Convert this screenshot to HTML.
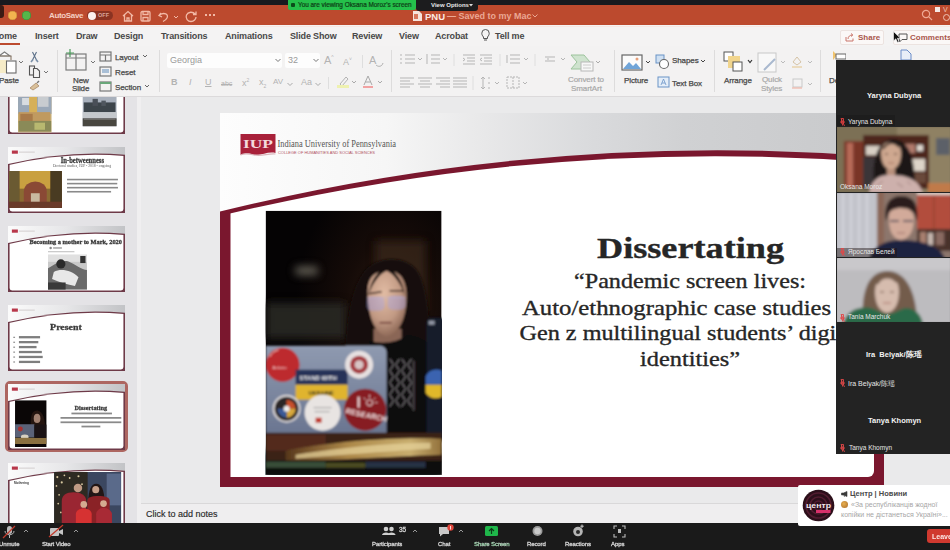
<!DOCTYPE html>
<html><head><meta charset="utf-8">
<style>
*{margin:0;padding:0;box-sizing:border-box}
html,body{width:950px;height:550px;overflow:hidden;background:#e8e8e9;font-family:"Liberation Sans",sans-serif;position:relative}
#root{position:absolute;left:0;top:0;width:950px;height:550px;overflow:hidden;filter:blur(0.5px)}
.a{position:absolute}
.t{position:absolute;white-space:nowrap;line-height:1}
.tab{top:31.5px;font-size:9px;font-weight:bold;color:#484848;letter-spacing:-0.15px}
.sep{top:50px;width:1px;height:42px;background:#dddcdc}
.lbl{font-size:8px;color:#474747;-webkit-text-stroke:0.25px #474747;letter-spacing:-0.1px}
.dimt{color:#a8a8a8;-webkit-text-stroke:0.2px #a8a8a8}
.dim{font-size:9px;color:#b3b3b3;top:78px}
.gname{font-size:7.5px;font-weight:bold;color:#f2f2f2}
.glab{font-size:6.5px;color:#e6e6e6}
.zl{font-size:6px;color:#d6d6d6;-webkit-text-stroke:0.3px #d6d6d6;letter-spacing:-0.1px}
</style></head><body><div id="root">
<!-- top black bar -->
<div class="a" style="left:0;top:0;width:950px;height:5px;background:#181a1f"></div>
<!-- title bar -->
<div class="a" style="left:0;top:4.5px;width:950px;height:20.5px;background:#bc4a2e"></div>
<div class="a" style="left:0;top:5px;width:4px;height:13px;background:#3a1a14;border-radius:0 3px 3px 0"></div>
<div class="a" style="left:8px;top:10.5px;width:9px;height:9px;border-radius:50%;background:#f2b34f;box-shadow:inset 0 0 0 0.6px #c88a3a"></div>
<div class="a" style="left:21.5px;top:10.5px;width:9px;height:9px;border-radius:50%;background:#56b64a;box-shadow:inset 0 0 0 0.6px #3a8a3a"></div>
<div class="t" style="left:49px;top:11.5px;font-size:8px;font-weight:bold;color:#f5d0c4;letter-spacing:-0.35px">AutoSave</div>
<div class="a" style="left:87px;top:11px;width:26px;height:9px;border-radius:5px;background:#8a3322"></div>
<div class="a" style="left:87.5px;top:11.5px;width:8px;height:8px;border-radius:50%;background:#fbf1ee"></div>
<div class="t" style="left:98px;top:12.5px;font-size:5.5px;font-weight:bold;color:#d9a699">OFF</div>
<svg class="a" style="left:120px;top:9px" width="100" height="14" viewBox="0 0 100 14" fill="none" stroke="#f2b9a6" stroke-width="1.3">
 <path d="M3 7 L8 2.5 L13 7 M4.5 6 V12 H11.5 V6 M7 12 V9 H9 V12"/>
 <rect x="21" y="2.5" width="9" height="9.5" rx="1.2"/><path d="M23 2.5 V5.5 H28 V2.5 M23 12 V8.5 H28 V12"/>
 <path d="M41 4 L39 6.5 L42 8 M39.5 6 C44 3 49 5 47 9 C46 11 44 12 43 12.5"/>
 <path d="M54 7 L56 9 L58 7" stroke-width="1"/>
 <path d="M75 5 C73 2.5 68 2.5 66.5 6 C65 9.5 68 12.5 71 12.5 C74 12.5 76 10 76 8 M76 2.5 V5.5 H73"/>
</svg>
<div class="a" style="left:205px;top:14px;width:2px;height:2px;background:#f2b9a6;box-shadow:4px 0 #f2b9a6,8px 0 #f2b9a6"></div>
<!-- title -->
<svg class="a" style="left:413px;top:11px" width="9" height="10" viewBox="0 0 9 10"><path d="M0 0 H6 L9 3 V10 H0Z" fill="#f6e3dc"/><path d="M1 3 H5 V8 H1Z" fill="#d8775d"/></svg>
<div class="t" style="left:425px;top:11.5px;font-size:9.5px;font-weight:bold;color:#fbe9e2">PNU</div>
<div class="t" style="left:447px;top:11.5px;font-size:9px;font-weight:bold;color:#eba894">— Saved to my Mac</div>
<svg class="a" style="left:532px;top:14px" width="6" height="4" viewBox="0 0 6 4"><path d="M0.5 0.5 L3 3 L5.5 0.5" stroke="#eba894" fill="none" stroke-width="1"/></svg>
<!-- zoom banner -->
<div class="a" style="left:288px;top:0;width:128px;height:10px;background:#25c04b;border-radius:0 0 2px 2px"></div>
<div class="a" style="left:291px;top:3px;width:4px;height:4px;background:#0b4d1a;border-radius:1px"></div>
<div class="t" style="left:298px;top:2px;font-size:6.4px;color:#0d3f16;-webkit-text-stroke:0.2px #0d3f16">You are viewing Oksana Moroz's screen</div>
<div class="a" style="left:416px;top:0;width:62px;height:11px;background:#1c1c1e;border-radius:0 0 3px 3px"></div>
<div class="t" style="left:431px;top:2px;font-size:6px;font-weight:bold;color:#e8e8e8">View Options</div>
<svg class="a" style="left:469px;top:4px" width="4" height="3" viewBox="0 0 4 3"><path d="M0 0 H4 L2 2.5Z" fill="#ddd"/></svg>
<!-- search etc -->
<svg class="a" style="left:921px;top:9px" width="12" height="12" viewBox="0 0 12 12" fill="none" stroke="#efa893" stroke-width="1.2"><circle cx="5" cy="5" r="3.6"/><path d="M7.6 7.6 L11 11"/></svg>
<div class="a" style="left:935px;top:7px;width:5px;height:5px;background:#f5e9e5"></div>
<div class="t" style="left:943px;top:6px;font-size:7px;color:#eec3b4">V</div>
<div class="a" style="left:943px;top:14px;width:7px;height:7px;border:1px solid #eec3b4;border-radius:50%"></div>

<!-- tabs row -->
<div class="a" style="left:0;top:25px;width:950px;height:21px;background:#f4f3f3"></div>
<div class="a" style="left:0;top:26px;width:950px;height:1px;background:#f7e7e2"></div>
<div class="t tab" style="left:-7.5px">Home</div>
<div class="a" style="left:0;top:43px;width:20px;height:2px;background:#bc4a2e"></div>
<div class="t tab" style="left:35px">Insert</div>
<div class="t tab" style="left:76px">Draw</div>
<div class="t tab" style="left:114px">Design</div>
<div class="t tab" style="left:161px">Transitions</div>
<div class="t tab" style="left:225px">Animations</div>
<div class="t tab" style="left:290px">Slide Show</div>
<div class="t tab" style="left:352px">Review</div>
<div class="t tab" style="left:399px">View</div>
<div class="t tab" style="left:435px">Acrobat</div>
<svg class="a" style="left:481px;top:29px" width="9" height="12" viewBox="0 0 9 12" fill="none" stroke="#555" stroke-width="1"><path d="M2.5 8 C1 6.5 0.8 5 0.8 4.2 A3.7 3.7 0 0 1 8.2 4.2 C8.2 5 8 6.5 6.5 8 V9.5 H2.5Z M3 11 H6"/></svg>
<div class="t tab" style="left:495px">Tell me</div>
<!-- share / comments -->
<div class="a" style="left:840px;top:30px;width:44px;height:15px;background:#fbf8f7;border:1px solid #ece3e0;border-radius:2px"></div>
<svg class="a" style="left:845px;top:33px" width="9" height="9" viewBox="0 0 9 9" fill="none" stroke="#c9756a" stroke-width="1"><path d="M1 4 V8 H8 V5.5 M3 6 C3 3.5 5 2 7.5 2 M6 0.5 L7.8 2 L6 3.5"/></svg>
<div class="t" style="left:858px;top:33.5px;font-size:8px;font-weight:bold;color:#a9564c">Share</div>
<div class="a" style="left:893px;top:30px;width:60px;height:15px;background:#fbf8f7;border:1px solid #ece3e0;border-radius:2px"></div>
<svg class="a" style="left:897px;top:33px" width="11" height="10" viewBox="0 0 11 10" fill="none" stroke="#555" stroke-width="1"><path d="M2 1 H10 V6.5 H5 L2.5 9 V6.5 H2Z"/></svg>
<div class="t" style="left:910px;top:33.5px;font-size:8px;font-weight:bold;color:#a9564c">Comments</div>
<svg class="a" style="left:893px;top:31px" width="8" height="12" viewBox="0 0 8 12"><path d="M0.5 0.5 V10 L2.8 7.8 L4.5 11.5 L6 10.8 L4.4 7.3 H7.5Z" fill="#111" stroke="#fff" stroke-width="0.6"/></svg>
<!-- ribbon -->
<div class="a" style="left:0;top:46px;width:950px;height:50px;background:#f3f2f2"></div>
<div class="a" style="left:0;top:96px;width:950px;height:1px;background:#dcdadb"></div>
<!-- separators -->
<div class="a sep" style="left:57px"></div>
<div class="a sep" style="left:159px"></div>
<div class="a sep" style="left:391px"></div>
<div class="a sep" style="left:614px"></div>
<div class="a sep" style="left:714px"></div>
<div class="a sep" style="left:820px"></div>
<!-- clipboard -->
<svg class="a" style="left:0;top:45px" width="60" height="48" viewBox="0 0 60 48" fill="none" stroke-width="1.1">
 <path d="M-1 11 L4.5 7 L10 11 Z" fill="#fff" stroke="#7a7a7a"/><path d="M-1 11 H11 V15" stroke="#8a7a6a"/>
 <rect x="-2" y="15" width="9" height="13" fill="#f6ecc8" stroke="none"/>
 <rect x="6.5" y="16" width="9.5" height="12" fill="#fff" stroke="#6a6a6a"/>
 <path d="M19 16 L21 18 L23 16" stroke="#666" stroke-width="0.9"/>
 <path d="M32.5 7 L36.5 15 M36.5 7 L32.5 15" stroke="#5a6f88"/><path d="M31 17 L33 14.5 M38 17 L36 14.5" stroke="#7a90a8" stroke-width="1.6"/>
 <rect x="29.5" y="21" width="5" height="9" stroke="#555"/><path d="M33.5 23.5 H37 L39.5 26 V32.5 H33.5Z" fill="#f3f2f2" stroke="#555"/>
 <path d="M44 26 L46 28 L48 26" stroke="#666" stroke-width="0.9"/>
 <path d="M30 43 L36 38 L39 41 L33 45Z" fill="#d9c09a" stroke="#a98a6a" stroke-width="0.8"/><path d="M37 38 L39 36" stroke="#777" stroke-width="1.5"/>
</svg>
<div class="t lbl" style="left:-1px;top:77px">Paste</div>
<!-- slides group -->
<svg class="a" style="left:62px;top:48px" width="95" height="46" viewBox="0 0 95 46" fill="none" stroke-width="1.2">
 <rect x="4" y="6" width="20" height="16" stroke="#7b7b7b"/><path d="M14 6 V22 M4 10 H24" stroke="#7b7b7b"/>
 <path d="M8 1 V9 M4 5 H12" stroke="#4a9a5a"/>
 <path d="M29 13 L31 15 L33 13" stroke="#666" stroke-width="0.9"/>
 <rect x="38" y="4" width="11" height="9" stroke="#777"/><path d="M38 7 H49 M43.5 7 V13" stroke="#777"/>
 <rect x="38" y="19" width="11" height="9" stroke="#777"/><rect x="40" y="21" width="7" height="4" fill="#a9bfd6" stroke="none"/>
 <rect x="38" y="34" width="11" height="9" stroke="#777"/><path d="M38 35 H49" stroke="#6aa77a" stroke-width="2"/>
 <path d="M81 7 L83 9 L85 7" stroke="#555" stroke-width="0.9"/>
 <path d="M83 37 L85 39 L87 37" stroke="#555" stroke-width="0.9"/>
</svg>
<div class="t lbl" style="left:73px;top:77px">New</div>
<div class="t lbl" style="left:72px;top:85px">Slide</div>
<div class="t lbl" style="left:115px;top:53.5px">Layout</div>
<div class="t lbl" style="left:115px;top:68.5px">Reset</div>
<div class="t lbl" style="left:115px;top:83.5px">Section</div>
<!-- font group -->
<div class="a" style="left:167px;top:53px;width:115px;height:15px;background:#fdfdfd;border-radius:2px"></div>
<div class="t" style="left:170px;top:56px;font-size:9px;color:#9a9a9a">Georgia</div>
<svg class="a" style="left:275px;top:58px" width="6" height="5" viewBox="0 0 6 5"><path d="M0.5 1 L3 3.5 L5.5 1" stroke="#777" fill="none"/></svg>
<div class="a" style="left:285px;top:53px;width:35px;height:15px;background:#fdfdfd;border-radius:2px"></div>
<div class="t" style="left:288px;top:56px;font-size:9px;color:#9a9a9a">32</div>
<svg class="a" style="left:313px;top:58px" width="6" height="5" viewBox="0 0 6 5"><path d="M0.5 1 L3 3.5 L5.5 1" stroke="#777" fill="none"/></svg>
<div class="t dim" style="left:171px;top:78px;font-weight:bold">B</div>
<div class="t dim" style="left:189px;top:78px;font-style:italic">I</div>
<div class="t dim" style="left:205px;top:78px;text-decoration:underline">U</div>
<div class="t dim" style="left:221px;top:78px;text-decoration:line-through;font-size:7px;top:80px">abc</div>
<div class="t dim" style="left:242px;top:78px">x<sup style="font-size:5px">2</sup></div>
<div class="t dim" style="left:259px;top:78px">x<sub style="font-size:5px">2</sub></div>
<div class="t dim" style="left:273px;top:78px;font-size:8px">AV</div>
<div class="t dim" style="left:301px;top:78px">Aa</div>
<svg class="a" style="left:287px;top:82px" width="40" height="5" viewBox="0 0 40 5" fill="none" stroke="#aaa"><path d="M0.5 1 L3 3.5 L5.5 1 M28.5 1 L31 3.5 L33.5 1"/></svg>
<div class="t dim" style="left:324px;top:55px;font-size:11px">A<sup style="font-size:5px">^</sup></div>
<div class="t dim" style="left:343px;top:57px;font-size:9px">A<sup style="font-size:5px">˅</sup></div>
<div class="a" style="left:362px;top:55px;width:1px;height:13px;background:#dedede"></div>
<div class="t dim" style="left:369px;top:55px;font-size:11px">A</div>
<svg class="a" style="left:375px;top:60px" width="9" height="7" viewBox="0 0 9 7"><path d="M1 5 C3 7 7 7 8 3" stroke="#b0b0b0" fill="none"/></svg>
<div class="a" style="left:328px;top:77px;width:1px;height:12px;background:#dedede"></div>
<svg class="a" style="left:336px;top:75px" width="50" height="14" viewBox="0 0 50 14" fill="none">
 <path d="M4 9 L10 2 L12 4 L6 11Z" stroke="#b3b3b3"/><rect x="1" y="10" width="12" height="3" fill="#eef1b0"/>
 <path d="M16 6 L18 8 L20 6" stroke="#aaa"/>
 <path d="M28 10 L32 1 L36 10 M29.5 7 H34.5" stroke="#a9a9a9"/><rect x="27" y="11" width="10" height="2" fill="#f1a2a2"/>
 <path d="M42 6 L44 8 L46 6" stroke="#aaa"/>
</svg>
<!-- paragraph group -->
<svg class="a" style="left:398px;top:52px" width="215" height="40" viewBox="0 0 215 40" fill="none" stroke="#b5b5b5" stroke-width="1">
 <path d="M2 3 H4 M7 3 H17 M2 7 H4 M7 7 H17 M2 11 H4 M7 11 H17"/><path d="M20 6 L22 8 L24 6"/>
 <path d="M29 2 V12 M33 3 H42 M33 7 H42 M33 11 H42"/><path d="M45 6 L47 8 L49 6"/>
 <path d="M56 2 V14" stroke="#dedede"/>
 <path d="M65 3 H77 M69 6 H77 M69 9 H77 M65 12 H77 M65 6 L67 7.5 L65 9"/>
 <path d="M82 3 H94 M86 6 H94 M86 9 H94 M82 12 H94 M84 6 L82 7.5 L84 9"/>
 <path d="M102 2 V14" stroke="#dedede"/>
 <path d="M112 3 H122 M112 7 H122 M112 11 H122 M109 3 V11"/><path d="M126 6 L128 8 L130 6"/>
 <path d="M137 2 V14" stroke="#dedede"/>
 <path d="M147 5 H157 M147 9 H157 M149 7 H151"/><path d="M163 6 L165 8 L167 6"/>
 <path d="M2 26 H16 M2 29 H12 M2 32 H16 M2 35 H12"/>
 <path d="M20 26 H34 M22 29 H32 M20 32 H34 M22 35 H32"/>
 <path d="M38 26 H52 M42 29 H52 M38 32 H52 M42 35 H52"/>
 <path d="M55 26 H69 M55 29 H69 M55 32 H69 M55 35 H69"/>
 <path d="M75 24 V38" stroke="#dedede"/>
 <path d="M85 25 V37 M83 27 L85 25 L87 27 M83 35 L85 37 L87 35 M90 26 H92 M90 31 H92 M90 36 H92"/><path d="M97 30 L99 32 L101 30"/>
 <path d="M109 25 H121 V36 H109Z M115 25 V36" stroke-dasharray="2 1"/><path d="M125 30 L127 32 L129 30"/>
</svg>
<!-- smartart -->
<svg class="a" style="left:570px;top:53px" width="32" height="20" viewBox="0 0 32 20" fill="none">
 <path d="M1 2 H14 L20 9 L14 16 H1 L7 9Z" fill="#cfe3cf" stroke="#9dc49d"/>
 <rect x="11" y="9" width="12" height="9" fill="#f7f7f7" stroke="#b8b8b8"/><path d="M13 12 H21 M13 15 H21" stroke="#ccc"/>
 <path d="M26 8 L28 10 L30 8" stroke="#aaa"/>
</svg>
<div class="t lbl dimt" style="left:568px;top:76px">Convert to</div>
<div class="t lbl dimt" style="left:571px;top:85px">SmartArt</div>
<!-- picture / shapes -->
<svg class="a" style="left:621px;top:54px" width="90" height="36" viewBox="0 0 90 36" fill="none">
 <rect x="1" y="1" width="20" height="15" fill="#fbfbfb" stroke="#666" stroke-width="1.2"/>
 <path d="M2 15 L8 8 L12 12 L15 9 L20 15Z" fill="#6fa4d8"/><circle cx="16" cy="5" r="1.5" fill="#e8a07a"/>
 <path d="M25 7 L27 9 L29 7" stroke="#444" stroke-width="1"/>
 <rect x="35" y="1" width="8" height="8" fill="#cfe0f2" stroke="#6a93c6"/><circle cx="43" cy="10" r="4.5" fill="#fff" stroke="#666" stroke-width="1.1"/>
 <rect x="37" y="23" width="11" height="10" fill="#e5eef8" stroke="#6a93c6"/><path d="M40 31 L42.5 25 L45 31 M41 29 H44" stroke="#6a93c6" stroke-width="0.8"/>
 <path d="M80 6 L82 8 L84 6" stroke="#444" stroke-width="1"/>
</svg>
<div class="t lbl" style="left:624px;top:77px">Picture</div>
<div class="t lbl" style="left:672px;top:57px">Shapes</div>
<div class="t lbl" style="left:672px;top:79.5px">Text Box</div>
<!-- arrange etc -->
<svg class="a" style="left:722px;top:50px" width="95" height="44" viewBox="0 0 95 44" fill="none">
 <rect x="2" y="2" width="9" height="9" fill="#fff" stroke="#555"/><rect x="6" y="6" width="12" height="12" fill="#f1d58d"/><rect x="11" y="12" width="9" height="9" fill="#fff" stroke="#555"/>
 <path d="M26 10 L28 12.5 L30 10" stroke="#333" stroke-width="1.2"/>
 <rect x="36" y="3" width="18" height="19" fill="#f8f8f8" stroke="#c8c8c8"/><path d="M42 20 L53 9" stroke="#a9b9cf" stroke-width="2"/>
 <path d="M59 11 L61 13 L63 11" stroke="#bbb"/>
 <path d="M71 12 L75 7 L79 12 L75 15Z" stroke="#d5c3a6"/><path d="M70 17 H80" stroke="#e9d3ad" stroke-width="1.5"/>
 <path d="M86 11 L88 13 L90 11" stroke="#bbb"/>
 <rect x="71" y="29" width="9" height="8" stroke="#c9c9c9"/><path d="M70 38 H80" stroke="#f0b6a8" stroke-width="1.2"/>
 <path d="M86 33 L88 35 L90 33" stroke="#bbb"/>
</svg>
<div class="t lbl" style="left:724px;top:76.5px">Arrange</div>
<div class="t lbl dimt" style="left:762px;top:76px">Quick</div>
<div class="t lbl dimt" style="left:761px;top:84.5px">Styles</div>
<svg class="a" style="left:832px;top:50px" width="14" height="12" viewBox="0 0 14 12"><path d="M1 1 L5 5 L1 10Z" fill="#f0c36d"/><rect x="4" y="4" width="10" height="5" fill="#fff" stroke="#666"/></svg>
<div class="t lbl" style="left:829px;top:77px">De</div>
<svg class="a" style="left:900px;top:49px" width="12" height="12" viewBox="0 0 12 12"><path d="M1 1 H7 L11 5 V11 H1Z" fill="#e8eef8" stroke="#6a8cc8" stroke-width="1"/></svg>
<!-- workspace -->
<div class="a" style="left:141px;top:97px;width:809px;height:406px;background:#eaeaeb"></div>
<div class="a" style="left:137px;top:97px;width:4px;height:426px;background:#f0eff0"></div>
<!-- slide -->
<svg class="a" style="left:220px;top:113px" width="664" height="374" viewBox="0 0 664 374">
 <defs>
  <linearGradient id="hg" x1="0" y1="0" x2="1" y2="0">
   <stop offset="0" stop-color="#fdfdfd"/><stop offset="0.25" stop-color="#f6f6f6"/><stop offset="0.4" stop-color="#e8e8e9"/><stop offset="0.55" stop-color="#dadbdd"/><stop offset="0.7" stop-color="#d0d1d3"/><stop offset="1" stop-color="#c8c9cb"/>
  </linearGradient>
  <clipPath id="wc"><rect x="10.5" y="0" width="643.5" height="364" rx="6"/><rect x="10.5" y="0" width="40" height="364"/></clipPath>
  <filter id="bl" x="-5%" y="-5%" width="110%" height="110%"><feGaussianBlur stdDeviation="1.1"/></filter>
 </defs>
 <rect width="664" height="374" fill="url(#hg)"/>
 <path d="M0,98.5 Q332,16.7 664,44.1 L664,374 L0,374Z" fill="#7a172e"/>
 <path d="M0,103 Q332,22.7 664,50.1 L664,374 L0,374Z" fill="#fff" clip-path="url(#wc)"/>
 <!-- IUP logo -->
 <path d="M20.5,21 H55.5 V40 C47,38 40,44 31,41 C26,40 23,41 20.5,42Z" fill="#a8213a"/>
 <path d="M20.5,42 C25,40 30,41 34,42 C42,44 48,40 55.5,41" stroke="#d9b5bb" stroke-width="1.2" fill="none"/>
 <text x="38" y="35" font-family="Liberation Serif" font-weight="bold" font-size="13" fill="#f4d9dd" text-anchor="middle" textLength="30" lengthAdjust="spacingAndGlyphs">IUP</text>
 <text x="57.5" y="33.5" font-family="Liberation Serif" font-size="10.5" fill="#555" textLength="118.5" lengthAdjust="spacingAndGlyphs">Indiana University of Pennsylvania</text>
 <text x="58" y="40.5" font-family="Liberation Sans" font-size="4" fill="#b0505e" textLength="97" lengthAdjust="spacingAndGlyphs">COLLEGE OF HUMANITIES AND SOCIAL SCIENCES</text>
 <!-- text -->
 <g font-family="Liberation Serif" fill="#262626" text-anchor="middle" stroke="#262626" stroke-width="0.35">
  <text x="470.5" y="145" font-weight="bold" font-size="28.5" textLength="187" lengthAdjust="spacingAndGlyphs">Dissertating</text>
  <text x="470" y="175" font-size="21.5" textLength="232" lengthAdjust="spacingAndGlyphs">“Pandemic screen lives:</text>
  <text x="470" y="201.5" font-size="21.5" textLength="336" lengthAdjust="spacingAndGlyphs">Auto/ethnographic case studies of</text>
  <text x="470" y="227" font-size="21.5" textLength="341" lengthAdjust="spacingAndGlyphs">Gen z multilingual students’ digital</text>
  <text x="470" y="253" font-size="21.5" textLength="100" lengthAdjust="spacingAndGlyphs">identities”</text>
 </g>
 <!-- photo -->
 <g transform="translate(45.6,97.7)">
  <clipPath id="pc"><rect width="176" height="264"/></clipPath>
  <radialGradient id="pbg" cx="0.72" cy="0.38" r="0.55"><stop offset="0" stop-color="#2e1c12"/><stop offset="0.5" stop-color="#150b08"/><stop offset="1" stop-color="#050304"/></radialGradient>
  <radialGradient id="face" cx="0.42" cy="0.35" r="0.75"><stop offset="0" stop-color="#e2bca4"/><stop offset="0.55" stop-color="#c29a84"/><stop offset="1" stop-color="#7a5646"/></radialGradient>
  <linearGradient id="lid" x1="0" y1="0" x2="0" y2="1"><stop offset="0" stop-color="#8f9ab0"/><stop offset="1" stop-color="#6a7590"/></linearGradient>
  <linearGradient id="desk" x1="0" y1="0" x2="1" y2="0"><stop offset="0" stop-color="#5a3a1c"/><stop offset="0.4" stop-color="#b9934e"/><stop offset="0.8" stop-color="#d8bd78"/><stop offset="1" stop-color="#9c7a40"/></linearGradient>
  <filter id="bl3" x="-20%" y="-20%" width="140%" height="140%"><feGaussianBlur stdDeviation="4"/></filter>
  <g clip-path="url(#pc)">
  <rect width="176" height="264" fill="url(#pbg)"/>
  <g filter="url(#bl3)">
   <rect x="0" y="92" width="80" height="36" fill="#2a2823" opacity="0.9"/>
   <rect x="30" y="56" width="22" height="8" fill="#6a665c"/>
   <rect x="110" y="30" width="50" height="70" fill="#3a2618" opacity="0.7"/>
   <rect x="0" y="240" width="176" height="30" fill="#101416"/>
  </g>
  <g filter="url(#bl)">
   <!-- hair -->
   <path d="M80,150 C80,110 86,62 110,52 C124,46 140,48 150,58 C162,72 164,110 166,150Z" fill="#160f0c"/>
   
   <!-- neck -->
   <path d="M108,118 H136 V134 H108Z" fill="#8a6656"/>
   <!-- face -->
   <path d="M102,80 C102,66 110,60 121,60 C134,60 141,68 141,84 C141,104 136,122 121,126 C108,122 102,104 102,80Z" fill="url(#face)"/>
   <path d="M121,56 C108,58 100,70 100,90 C100,108 104,122 96,140 L86,140 C90,110 88,70 104,58Z" fill="#160f0c"/><path d="M121,56 C112,60 105,70 103,84 C107,72 114,63 121,60Z" fill="#160f0c"/>
   <path d="M121,56 C134,58 142,70 142,90 C142,108 140,122 150,140 L162,140 C154,110 158,70 140,58Z" fill="#160f0c"/><path d="M121,56 C130,60 137,70 139,84 C135,72 128,63 121,60Z" fill="#160f0c"/>
   <!-- brows/glasses -->
   <path d="M103,83 L116,81 M124,80 L138,80" stroke="#3a2620" stroke-width="1.6"/>
   <rect x="101" y="86" width="18" height="14" rx="5" fill="#a0a4f0" opacity="0.38"/>
   <rect x="122" y="85" width="18" height="14" rx="5" fill="#a0a4f0" opacity="0.38"/>
   <path d="M101,87 H140" stroke="#b6b0d8" stroke-width="0.8" opacity="0.7"/>
   <path d="M114,112 H126" stroke="#7a4a42" stroke-width="1.8"/>
   <!-- shirt -->
   <path d="M104,130 C116,134 132,132 142,124 C156,126 166,132 168,142 L170,230 H108Z" fill="#0c0a0c"/>
   <g fill="none" stroke="#b8b2b8" stroke-width="1" opacity="0.75">
    <path d="M124,148 L128,154 L124,160 L128,166 L124,172 L128,178 L124,184 L128,190 L124,196"/>
    <path d="M134,148 L130,154 L134,160 L130,166 L134,172 L130,178 L134,184 L130,190 L134,196"/>
    <path d="M136,148 L140,154 L136,160 L140,166 L136,172 L140,178 L136,184 L140,190 L136,196"/>
    <path d="M146,148 L142,154 L146,160 L142,166 L146,172 L142,178 L146,184 L142,190 L146,196"/>
   </g>
   <path d="M148,150 V200" stroke="#4a4448" stroke-width="2"/>
   <!-- bottle -->
   <rect x="161" y="107" width="18" height="125" rx="5" fill="#161c2c"/><rect x="163" y="110" width="6" height="4" fill="#c8ccd8" opacity="0.7"/>
   <path d="M160,166 A12,12 0 0 1 176,160 V174 H160Z" fill="#3a63b0"/>
   <path d="M160,174 H176 V186 A12,12 0 0 1 160,182Z" fill="#e0b82a"/>
   <!-- laptop lid -->
   <path d="M0,135 H114 C118,135 121,138 121,142 V224 H0Z" fill="url(#lid)"/>
   <circle cx="17" cy="154" r="17" fill="#bd2a2e"/><path d="M4,146 A14,14 0 0 1 13,139" stroke="#f2c4c4" fill="none"/>
   <text x="7" y="158" font-size="4" fill="#f7d0d0" font-family="Liberation Sans">Arduino</text>
   <rect x="30" y="159" width="52" height="15" fill="#283258"/><rect x="30" y="174" width="52" height="15" fill="#e0b42e"/>
   <text x="34" y="169" font-size="6" font-weight="bold" fill="#f2f2f2" font-family="Liberation Sans">STAND WITH</text>
   <text x="43" y="184" font-size="5.5" font-weight="bold" fill="#2a2a2a" font-family="Liberation Sans">UKRAINE</text>
   <circle cx="93.5" cy="154" r="14" fill="#e6e0e0"/><circle cx="93.5" cy="154" r="9" fill="#a43a40"/><circle cx="93.5" cy="154" r="4.5" fill="#d8c4c4"/>
   <circle cx="21" cy="198" r="14" fill="#d8d4d6"/><circle cx="21" cy="198" r="12" fill="#2a2628"/><path d="M21,189 A9,9 0 0 1 30,198 H21Z" fill="#c8502a"/><path d="M30,198 A9,9 0 0 1 21,207 V198Z" fill="#d8a83a"/><path d="M21,207 A9,9 0 0 1 12,198 H21Z" fill="#3a5a98"/><circle cx="21" cy="198" r="3" fill="#eee"/>
   <circle cx="57" cy="202" r="18" fill="#e8e4e2"/><rect x="50" y="207" width="6" height="5" fill="#c0392b"/><path d="M48,197 H66 M49,201 H64" stroke="#a0a0a0" stroke-width="1"/>
   <circle cx="99.5" cy="199" r="21" fill="#871c22"/>
   <text x="101" y="207" font-size="7.5" font-weight="bold" fill="#f0dede" font-family="Liberation Sans" text-anchor="middle" transform="rotate(12 101 203)">RESEARCH</text>
   <path d="M93,186 V197" stroke="#f0dede" stroke-width="2"/><circle cx="104" cy="192" r="3" fill="none" stroke="#f0dede" stroke-width="1"/><path d="M104,184 V187 M110,187 L108,189 M112,192 H109 M98,187 L100,189" stroke="#f0dede" stroke-width="0.8"/>
   <!-- desk -->
   <path d="M0,222 H176 V252 H0Z" fill="#3a2418"/>
   <path d="M0,224 H60 V240 H0Z" fill="#5a2a22" opacity="0.8"/>
   <path d="M20,240 C60,232 120,226 176,228 V244 C120,246 60,250 20,250Z" fill="url(#desk)" opacity="0.9"/>
   <path d="M30,244 C80,236 130,232 165,232 V238 C130,240 80,244 30,248Z" fill="#e6d29a" opacity="0.75"/>
   <rect x="0" y="250" width="176" height="14" fill="#0c0e0e"/>
   <rect x="0" y="251" width="60" height="6" fill="#4a6a4a" opacity="0.7"/><rect x="60" y="252" width="40" height="5" fill="#8a8a3a" opacity="0.5"/><rect x="100" y="251" width="60" height="6" fill="#3a4a6a" opacity="0.6"/>
  </g>
  </g>
 </g>
</svg>
<div class="a" style="left:0;top:97px;width:137px;height:426px;background:#e4e3e6;overflow:hidden"><div class="a" style="left:0;top:-97px;width:137px;height:550px">
<svg width="0" height="0" style="position:absolute"><defs>
<linearGradient id="thg" x1="0" y1="0" x2="1" y2="0"><stop offset="0" stop-color="#fbfbfb"/><stop offset="0.5" stop-color="#e6e6e8"/><stop offset="1" stop-color="#c2c3c6"/></linearGradient>
<filter id="tb" x="-5%" y="-5%" width="110%" height="110%"><feGaussianBlur stdDeviation="4"/></filter>
<clipPath id="thc"><rect x="9" y="0" width="646" height="366" rx="14"/></clipPath>
</defs></svg>
<svg class="a" style="left:8px;top:68px" width="117" height="66" viewBox="0 0 664 374" preserveAspectRatio="none"><rect width="664" height="374" fill="url(#thg)"/>
<path d="M0,97 Q332,16.7 664,44.1 L664,374 L0,374Z" fill="#6e3a48"/>
<path d="M0,104 Q332,23.7 664,51.1 L664,374 L0,374Z" fill="#fff" clip-path="url(#thc)"/>
<rect x="22" y="20" width="34" height="18" fill="#b8374a"/><rect x="62" y="26" width="90" height="6" fill="#d4cfd0"/><g filter="url(#tb)"><rect x="57" y="150" width="190" height="215" fill="#c8b078"/><rect x="57" y="150" width="190" height="110" fill="#9aa8b8"/><rect x="80" y="170" width="60" height="40" fill="#d8dce0"/><rect x="170" y="160" width="60" height="60" fill="#c8ccd0"/><rect x="120" y="150" width="45" height="130" fill="#d6b058"/><rect x="60" y="250" width="180" height="60" fill="#c09a60"/><rect x="70" y="260" width="70" height="40" fill="#a87a48"/><rect x="60" y="300" width="185" height="60" fill="#8a8a58"/><rect x="150" y="310" width="60" height="40" fill="#b8b870"/></g><g filter="url(#tb)"><rect x="424" y="150" width="192" height="180" fill="#a8b0bc"/><rect x="430" y="195" width="180" height="55" fill="#3e444c"/><rect x="480" y="175" width="30" height="40" fill="#4a5058"/><rect x="530" y="185" width="25" height="30" fill="#50565e"/><rect x="424" y="250" width="192" height="35" fill="#c4c8cc"/><rect x="424" y="285" width="192" height="45" fill="#484640"/><path d="M430,290 H610" stroke="#aaa" stroke-width="3"/></g></svg>
<svg class="a" style="left:8px;top:147px" width="117" height="66" viewBox="0 0 664 374" preserveAspectRatio="none"><rect width="664" height="374" fill="url(#thg)"/>
<path d="M0,97 Q332,16.7 664,44.1 L664,374 L0,374Z" fill="#6e3a48"/>
<path d="M0,104 Q332,23.7 664,51.1 L664,374 L0,374Z" fill="#fff" clip-path="url(#thc)"/>
<rect x="22" y="20" width="34" height="18" fill="#b8374a"/><rect x="62" y="26" width="90" height="6" fill="#d4cfd0"/><g filter="url(#tb)"><rect x="6" y="136" width="300" height="209" fill="#8a6a30"/><rect x="6" y="136" width="300" height="100" fill="#c9a040"/><rect x="6" y="136" width="60" height="209" fill="#6a5a30"/><rect x="240" y="136" width="66" height="209" fill="#4a3a20"/><path d="M90,345 V250 A65,55 0 0 1 220,250 V345Z" fill="#8a4a36"/><rect x="130" y="262" width="50" height="83" fill="#c9b9a0"/><rect x="6" y="310" width="300" height="35" fill="#6a3a2a"/></g><g font-family="Liberation Serif" fill="#3a3a3a" text-anchor="middle" stroke="#3a3a3a" stroke-width="1.5"><text x="422" y="90" font-size="42" font-weight="bold" textLength="245" lengthAdjust="spacingAndGlyphs">In-betweenness</text><text x="420" y="112" font-size="20" fill="#555" stroke="none" textLength="330" lengthAdjust="spacingAndGlyphs">Doctoral studies, IUP - 2018 - ongoing</text></g><g fill="#8a8a8a"><rect x="335" y="180" width="289" height="9"/><rect x="335" y="203" width="285" height="9"/><rect x="335" y="226" width="289" height="9"/><rect x="335" y="249" width="250" height="9"/></g></svg>
<svg class="a" style="left:8px;top:226px" width="117" height="66" viewBox="0 0 664 374" preserveAspectRatio="none"><rect width="664" height="374" fill="url(#thg)"/>
<path d="M0,97 Q332,16.7 664,44.1 L664,374 L0,374Z" fill="#6e3a48"/>
<path d="M0,104 Q332,23.7 664,51.1 L664,374 L0,374Z" fill="#fff" clip-path="url(#thc)"/>
<rect x="22" y="20" width="34" height="18" fill="#b8374a"/><rect x="62" y="26" width="90" height="6" fill="#d4cfd0"/><g font-family="Liberation Serif" fill="#3a3a3a" text-anchor="middle" stroke="#3a3a3a" stroke-width="2"><text x="384" y="101" font-size="40" font-weight="bold" textLength="525" lengthAdjust="spacingAndGlyphs">Becoming a mother to Mark, 2020</text></g><circle cx="242" cy="125" r="7" fill="#888"/><rect x="256" y="120" width="50" height="9" fill="#aaa"/><rect x="227" y="142" width="150" height="7" fill="#c8c8c8"/><rect x="227" y="163" width="221" height="197" fill="#c9c9c9"/><rect x="227" y="163" width="221" height="40" fill="#e0e0e0"/><path d="M227,240 C260,220 300,190 340,200 C380,215 420,250 448,250 V360 H227Z" fill="#6a6a6a"/><circle cx="300" cy="215" r="26" fill="#2a2a2a"/><path d="M260,260 C300,240 360,250 400,290 L380,340 C340,330 290,320 250,300Z" fill="#e8e8e8"/><rect x="410" y="170" width="30" height="40" fill="#333"/><rect x="227" y="320" width="100" height="40" fill="#3a3a3a"/></svg>
<svg class="a" style="left:8px;top:305px" width="117" height="66" viewBox="0 0 664 374" preserveAspectRatio="none"><rect width="664" height="374" fill="url(#thg)"/>
<path d="M0,97 Q332,16.7 664,44.1 L664,374 L0,374Z" fill="#6e3a48"/>
<path d="M0,104 Q332,23.7 664,51.1 L664,374 L0,374Z" fill="#fff" clip-path="url(#thc)"/>
<rect x="22" y="20" width="34" height="18" fill="#b8374a"/><rect x="62" y="26" width="90" height="6" fill="#d4cfd0"/><g font-family="Liberation Serif" fill="#3a3a3a" text-anchor="middle" stroke="#3a3a3a" stroke-width="1.5"><text x="329" y="142" font-size="44" font-weight="bold" textLength="180" lengthAdjust="spacingAndGlyphs">Present</text></g><g fill="#7e7e7e"><rect x="30" y="180" width="10" height="6"/><rect x="62" y="176" width="120" height="13"/><rect x="30" y="208" width="10" height="6"/><rect x="62" y="204" width="110" height="13"/><rect x="30" y="236" width="10" height="6"/><rect x="62" y="232" width="100" height="13"/><rect x="30" y="264" width="10" height="6"/><rect x="62" y="260" width="130" height="13"/><rect x="30" y="292" width="10" height="6"/><rect x="62" y="288" width="135" height="13"/><rect x="30" y="320" width="10" height="6"/><rect x="62" y="316" width="120" height="13"/></g></svg>
<div class="a" style="left:5px;top:381px;width:123px;height:71px;border:3px solid #ad6661;border-radius:5px"></div><svg class="a" style="left:8px;top:384px" width="117" height="66" viewBox="0 0 664 374" preserveAspectRatio="none"><rect width="664" height="374" fill="url(#thg)"/>
<path d="M0,97 Q332,16.7 664,44.1 L664,374 L0,374Z" fill="#6e3a48"/>
<path d="M0,104 Q332,23.7 664,51.1 L664,374 L0,374Z" fill="#fff" clip-path="url(#thc)"/>
<rect x="22" y="20" width="34" height="18" fill="#b8374a"/><rect x="62" y="26" width="90" height="6" fill="#d4cfd0"/><rect x="40" y="93" width="178" height="264" fill="#0a0606"/><path d="M130,240 C125,170 140,150 168,150 C198,155 210,200 212,250Z" fill="#241510"/><ellipse cx="165" cy="195" rx="19" ry="26" fill="#a08070"/><rect x="40" y="228" width="110" height="75" fill="#5a6278"/><circle cx="70" cy="255" r="14" fill="#a83030"/><ellipse cx="95" cy="300" rx="22" ry="14" fill="#d8d0c0"/><rect x="40" y="305" width="178" height="35" fill="#8a7040"/><rect x="150" y="230" width="68" height="75" fill="#1a1214"/><g font-family="Liberation Serif" fill="#3a3a3a" text-anchor="middle" stroke="#3a3a3a" stroke-width="1.5"><text x="470" y="150" font-size="36" font-weight="bold" textLength="185" lengthAdjust="spacingAndGlyphs">Dissertating</text></g><g fill="#8a8a8a"><rect x="360" y="162" width="230" height="10"/><rect x="298" y="187" width="345" height="10"/><rect x="298" y="212" width="345" height="10"/><rect x="417" y="236" width="107" height="10"/></g></svg>
<svg class="a" style="left:8px;top:463px" width="117" height="66" viewBox="0 0 664 374" preserveAspectRatio="none"><rect width="664" height="374" fill="url(#thg)"/>
<path d="M0,97 Q332,16.7 664,44.1 L664,374 L0,374Z" fill="#6e3a48"/>
<path d="M0,104 Q332,23.7 664,51.1 L664,374 L0,374Z" fill="#fff" clip-path="url(#thc)"/>
<rect x="22" y="20" width="34" height="18" fill="#b8374a"/><rect x="62" y="26" width="90" height="6" fill="#d4cfd0"/><g font-family="Liberation Sans" font-weight="bold" fill="#333"><text x="34" y="120" font-size="17" textLength="84" lengthAdjust="spacingAndGlyphs">Mothering</text></g><g filter="url(#tb)"><rect x="262" y="51" width="380" height="307" fill="#3a4660"/><rect x="262" y="51" width="190" height="307" fill="#2e2a22"/><g fill="#d8c8a0"><circle cx="280" cy="80" r="6"/><circle cx="320" cy="70" r="5"/><circle cx="275" cy="130" r="5"/><circle cx="305" cy="110" r="6"/><circle cx="290" cy="180" r="5"/><circle cx="350" cy="85" r="5"/><circle cx="400" cy="75" r="6"/><circle cx="420" cy="120" r="5"/><circle cx="285" cy="230" r="5"/><circle cx="300" cy="280" r="5"/></g><rect x="560" y="60" width="80" height="180" fill="#5a6a8a"/><path d="M305,358 V215 C305,185 330,166 372,166 C414,166 444,185 444,215 V358Z" fill="#9a2530"/><circle cx="397" cy="142" r="24" fill="#c09a84"/><path d="M455,230 C455,150 475,118 500,118 C528,118 548,150 548,230 V260 H455Z" fill="#241612"/><circle cx="498" cy="151" r="20" fill="#c8a08a"/><path d="M450,358 V215 C450,195 470,187 512,187 C555,187 577,195 577,215 V358Z" fill="#8a2028"/><circle cx="430" cy="235" r="19" fill="#d4aa90"/><path d="M385,358 V290 C385,270 405,258 430,258 C455,258 475,270 475,290 V358Z" fill="#d63030"/><circle cx="542" cy="230" r="19" fill="#d4aa90"/><path d="M500,358 V290 C500,270 520,253 542,253 C565,253 590,270 590,290 V358Z" fill="#a82a34"/></g></svg></div></div><!-- notes -->
<div class="a" style="left:141px;top:503px;width:809px;height:20px;background:#efeeef"></div>
<div class="a" style="left:141px;top:503px;width:809px;height:1px;background:#d9d8d9"></div>
<div class="t" style="left:146px;top:509.5px;font-size:9px;color:#2a2a2a;-webkit-text-stroke:0.15px #2a2a2a">Click to add notes</div>
<!-- zoom toolbar -->
<div class="a" style="left:0;top:523px;width:950px;height:27px;background:#1a1a1a"></div>
<svg class="a" style="left:0;top:524px" width="950" height="18" viewBox="0 0 950 18" fill="none">
 <!-- mic -->
 <rect x="7" y="2" width="5" height="8" rx="2.5" fill="#b9b9b9"/><path d="M5 7 C5 12 14 12 14 7 M9.5 11 V14" stroke="#b9b9b9"/><path d="M3 14 L15 2" stroke="#c0392b" stroke-width="1.3"/>
 <path d="M24 8 L26 6 L28 8" stroke="#999"/>
 <!-- video -->
 <rect x="50" y="4" width="9" height="8" rx="1" fill="#c4c4c4"/><path d="M59 7 L63 5 V11 L59 9Z" fill="#c4c4c4"/><path d="M49 13 L63 1" stroke="#c0392b" stroke-width="1.3"/>
 <path d="M74 8 L76 6 L78 8" stroke="#999"/>
 <!-- participants -->
 <circle cx="386" cy="5" r="2.3" fill="#cfcfcf"/><path d="M382 11 C382 7.5 390 7.5 390 11Z" fill="#cfcfcf"/>
 <circle cx="391.5" cy="5" r="2.3" fill="#cfcfcf"/><path d="M387.5 11 C387.5 7.5 395.5 7.5 395.5 11Z" fill="#cfcfcf"/>
 <path d="M413 8 L415 6 L417 8" stroke="#999"/>
 <!-- chat -->
 <path d="M439 3 H449 V10 H443 L440 12.5 V10 H439Z" fill="#c8c8c8"/>
 <circle cx="450.5" cy="3.5" r="3.2" fill="#e0463c"/><path d="M450.5 2 V5.5" stroke="#fff" stroke-width="0.8"/>
 <path d="M459 8 L461 6 L463 8" stroke="#999"/>
 <!-- share screen -->
 <rect x="485" y="2" width="13" height="10" rx="1.5" fill="#1fb64a"/><path d="M491.5 10 V5 M489 7 L491.5 4.5 L494 7" stroke="#0b3a18" stroke-width="1.2"/>
 <!-- record -->
 <circle cx="537.5" cy="7" r="5" fill="#9a9a9a"/><circle cx="537.5" cy="7" r="3.2" fill="#c9c9c9"/>
 <!-- reactions -->
 <circle cx="578" cy="7.5" r="4.8" fill="#b5b5b5"/><circle cx="578" cy="8" r="2" fill="#2a2a2a"/><path d="M582 0.5 V4 M580.3 2.2 H583.7" stroke="#ccc"/>
 <!-- apps -->
 <path d="M614 5 V2 H617 M622 2 H625 V5 M625 10 V13 H622 M617 13 H614 V10" stroke="#bbb" stroke-width="1.1"/><rect x="618" y="5" width="3" height="4" fill="#bbb"/>
</svg>
<div class="t zl" style="left:-1px;top:541px">Unmute</div>
<div class="t zl" style="left:42px;top:541px">Start Video</div>
<div class="t zl" style="left:399px;top:526.5px;font-size:6.5px">35</div>
<div class="t zl" style="left:372px;top:541px">Participants</div>
<div class="t zl" style="left:438px;top:541px">Chat</div>
<div class="t zl" style="left:474px;top:541px;color:#2ec95a">Share Screen</div>
<div class="t zl" style="left:527px;top:541px">Record</div>
<div class="t zl" style="left:565px;top:541px">Reactions</div>
<div class="t zl" style="left:611px;top:541px">Apps</div>
<div class="a" style="left:927px;top:529px;width:28px;height:14px;background:#d0392f;border-radius:3px"></div>
<div class="t" style="left:932px;top:532.5px;font-size:7px;font-weight:bold;color:#fde8e6">Leave</div>
<!-- notification -->
<div class="a" style="left:798px;top:485px;width:152px;height:41px;background:#fff;border-radius:2px 0 0 2px"></div>
<svg class="a" style="left:802px;top:489px" width="33" height="33" viewBox="0 0 33 33">
 <circle cx="16.5" cy="16.5" r="15.8" fill="#2c0f1a"/>
 <circle cx="16.5" cy="16.5" r="12.5" fill="none" stroke="#521c30" stroke-width="1.6"/><circle cx="16.5" cy="16.5" r="8.5" fill="none" stroke="#521c30" stroke-width="1.6"/><circle cx="16.5" cy="16.5" r="4.5" fill="none" stroke="#521c30" stroke-width="1.4"/>
 <text x="16.5" y="19" font-family="Liberation Sans" font-weight="bold" font-size="8" fill="#f0e8ea" text-anchor="middle" textLength="25" lengthAdjust="spacingAndGlyphs">центр</text>
 <rect x="14" y="21" width="14.5" height="3" fill="#d8306a"/>
</svg>
<svg class="a" style="left:841px;top:491px" width="8" height="6" viewBox="0 0 8 6"><path d="M0.5 2 H2.5 L6 0.5 V5.5 L2.5 4 H0.5Z M3 4 L3.5 6" fill="#3a3a3a" stroke="#3a3a3a" stroke-width="0.6"/></svg>
<div class="t" style="left:850px;top:489.5px;font-size:7.5px;font-weight:bold;color:#4a4a4a">Центр | Новини</div>
<div class="a" style="left:841px;top:501px;width:7px;height:7px;border-radius:50%;background:radial-gradient(circle at 40% 40%,#e8b050,#a86a28)"></div>
<div class="t" style="left:851px;top:501px;font-size:7px;color:#a6a6a6">«За республіканців жодної</div>
<div class="t" style="left:841px;top:511px;font-size:7px;color:#a6a6a6">копійки не дістанеться Україні»...</div>
<!-- gallery -->
<div class="a" style="left:836px;top:60px;width:114px;height:394px;background:#232323"></div>
<!-- tile1 -->
<div class="a" style="left:837px;top:60px;width:113px;height:66px;background:#222"></div>
<div class="t gname" style="left:867px;top:91.5px">Yaryna Dubyna</div>
<div class="a" style="left:837px;top:115px;width:58px;height:11px;background:#1d1d1d"></div>
<svg class="a mic" style="left:840px;top:118px" width="5" height="8" viewBox="0 0 5 8"><path d="M1.5 0.5 H3.5 V5 H1.5Z M0.5 3.5 C0.5 6 4.5 6 4.5 3.5 M2.5 6 V7.5 M1 0 L4.5 8" stroke="#e04040" fill="none" stroke-width="0.9"/></svg>
<div class="t glab" style="left:848px;top:119px">Yaryna Dubyna</div>
<!-- tile2 Oksana -->
<svg class="a" style="left:837px;top:127px" width="113" height="65" viewBox="0 0 113 65">
 <defs><filter id="gb" x="-10%" y="-10%" width="120%" height="120%"><feGaussianBlur stdDeviation="1.4"/></filter></defs>
 <g filter="url(#gb)">
 <rect x="-2" y="-2" width="117" height="69" fill="#7b6f55"/>
 <rect x="60" y="0" width="55" height="65" fill="#8f8163"/>
 <rect x="7" y="14" width="21" height="47" fill="#7a3526"/><rect x="10" y="16" width="6" height="44" fill="#b86a58"/>
 <rect x="26" y="8" width="66" height="54" fill="#4e261c"/>
 <rect x="29" y="19" width="14" height="9" fill="#d8cfc4"/><rect x="30" y="33" width="12" height="8" fill="#a77060"/>
 <rect x="65" y="17" width="13" height="9" fill="#b07a6c"/><rect x="80" y="18" width="6" height="6" fill="#e0d8d0"/>
 <rect x="68" y="32" width="20" height="12" fill="#ddd4c8"/><rect x="65" y="46" width="24" height="10" fill="#6a4a3a"/>
 <rect x="99" y="11" width="14" height="17" fill="#5b6068"/>
 <rect x="91" y="56" width="24" height="10" fill="#c07a4a"/>
 <rect x="26" y="30" width="14" height="32" fill="#3a3438"/>
 <path d="M38,62 C34,40 38,14 55,12 C72,12 78,30 78,62Z" fill="#1e1614"/>
 <path d="M44,26 C44,18 48,15 54,15 C61,15 64,19 64,27 C64,36 60,42 54,43 C48,42 44,36 44,26Z" fill="#cfa890"/>
 <path d="M46,22 C50,15 58,14 62,20" stroke="#1e1614" stroke-width="2" fill="none"/>
 <path d="M48,27 H51 M57,27 H60" stroke="#4a3028" stroke-width="1"/><path d="M51,36 H57" stroke="#a06a5a" stroke-width="1"/>
 <path d="M50,42 V48 H58 V42Z" fill="#b8907c"/>
 <path d="M32,66 C34,52 44,47 54,48 C68,48 82,52 86,66Z" fill="#cdb0ac"/>
 <path d="M40,58 L46,54 M60,56 L66,60 M70,54 L74,58" stroke="#9a7a7a" stroke-width="1"/>
 </g>
</svg>

<div class="t glab" style="left:840px;top:184px">Oksana Moroz</div>
<!-- tile3 Yaroslav -->
<svg class="a" style="left:837px;top:193px" width="113" height="64" viewBox="0 0 113 64">
 <g filter="url(#gb)">
 <rect x="-2" y="-2" width="117" height="68" fill="#8c766c"/>
 <rect x="-2" y="-2" width="42" height="68" fill="#c2c3ca"/>
 <path d="M6,0 V64 M14,0 V64 M22,0 V64 M30,0 V64" stroke="#d4d5dc" stroke-width="2"/>
 <rect x="40" y="-2" width="7" height="68" fill="#8a6656"/>
 <rect x="80" y="-2" width="35" height="38" fill="#b24e3c"/><rect x="80" y="-2" width="35" height="4" fill="#dccdc6"/>
 <path d="M97,2 V36" stroke="#8a3a2a" stroke-width="1"/>
 <rect x="80" y="36" width="35" height="22" fill="#4a302c"/><rect x="83" y="39" width="6" height="13" fill="#a88070"/><rect x="91" y="40" width="5" height="12" fill="#c8b8b0"/><rect x="99" y="39" width="8" height="13" fill="#8a6a62"/>
 <path d="M49,28 C46,10 54,3 64,3 C76,3 82,10 80,28 L77,20 C72,15 58,15 52,20Z" fill="#2a1e1a"/>
 <path d="M52,22 C52,17 58,15 64,15 C72,15 77,18 77,26 C77,38 72,46 64,47 C56,46 51,38 52,22Z" fill="#d2aa9a"/>
 <path d="M53,28 H62 M66,28 H76" stroke="#3a3a50" stroke-width="1.3"/>
 <path d="M60,40 H68" stroke="#9a6a64" stroke-width="1"/>
 <path d="M32,66 C36,52 50,47 64,47 C82,47 104,52 108,66Z" fill="#1c2040"/>
 </g>
</svg>
<div class="a" style="left:837px;top:248px;width:60px;height:9px;background:rgba(30,20,20,0.45)"></div>
<div class="t glab" style="left:848px;top:249px">Ярослав Белей</div>
<!-- tile4 Tania -->
<svg class="a" style="left:837px;top:258px" width="113" height="64" viewBox="0 0 113 64">
 <g filter="url(#gb)">
 <rect x="-2" y="-2" width="117" height="68" fill="#bdbcbf"/>
 <rect x="-2" y="-2" width="117" height="14" fill="#c9c8cb"/>
 <path d="M26,66 C24,40 28,14 50,13 C72,13 80,40 80,66Z" fill="#735c4c"/>
 <path d="M38,34 C38,24 43,19 50,19 C58,19 62,24 62,34 C62,46 57,54 50,55 C43,54 38,46 38,34Z" fill="#d6bcae"/>
 <path d="M40,26 C44,18 54,17 60,24" stroke="#735c4c" stroke-width="2.5" fill="none"/>
 <path d="M43,34 H47 M53,34 H57" stroke="#6a4a40" stroke-width="1"/><path d="M46,45 H54" stroke="#b07a70" stroke-width="1.2"/>
 <path d="M6,66 C10,52 22,48 34,50 C40,52 46,56 50,56 C56,56 62,52 68,50 C78,50 84,56 86,66Z" fill="#2a6a48"/>
 </g>
</svg>

<div class="t glab" style="left:848px;top:314px">Tania Marchuk</div>
<!-- tile5 Ira -->
<div class="a" style="left:837px;top:323px;width:113px;height:65px;background:#232323"></div>
<div class="t gname" style="left:866px;top:351px">Ira &nbsp;Belyak/陈瑶</div>
<div class="t glab" style="left:848px;top:379.5px;font-size:7px">Ira Belyak/陈瑶</div>
<!-- tile6 Tanya -->
<div class="a" style="left:837px;top:389px;width:113px;height:64px;background:#232323"></div>
<div class="t gname" style="left:868px;top:417px">Tanya Khomyn</div>
<div class="t glab" style="left:849px;top:445px">Tanya Khomyn</div>
<svg class="a" style="left:840px;top:183px" width="6" height="270" viewBox="0 0 6 270" fill="none" stroke="#e04848" stroke-width="0.9">
 <g transform="translate(0,65)"><path d="M1.5 0.5 H3.5 V5 H1.5Z M0.5 3.5 C0.5 6 4.5 6 4.5 3.5 M2.5 6 V7.5 M1 0 L4.5 8"/></g>
 <g transform="translate(0,131)"><path d="M1.5 0.5 H3.5 V5 H1.5Z M0.5 3.5 C0.5 6 4.5 6 4.5 3.5 M2.5 6 V7.5 M1 0 L4.5 8"/></g>
 <g transform="translate(0,196)"><path d="M1.5 0.5 H3.5 V5 H1.5Z M0.5 3.5 C0.5 6 4.5 6 4.5 3.5 M2.5 6 V7.5 M1 0 L4.5 8"/></g>
 <g transform="translate(0,261)"><path d="M1.5 0.5 H3.5 V5 H1.5Z M0.5 3.5 C0.5 6 4.5 6 4.5 3.5 M2.5 6 V7.5 M1 0 L4.5 8"/></g>
</svg>
</div></body></html>
